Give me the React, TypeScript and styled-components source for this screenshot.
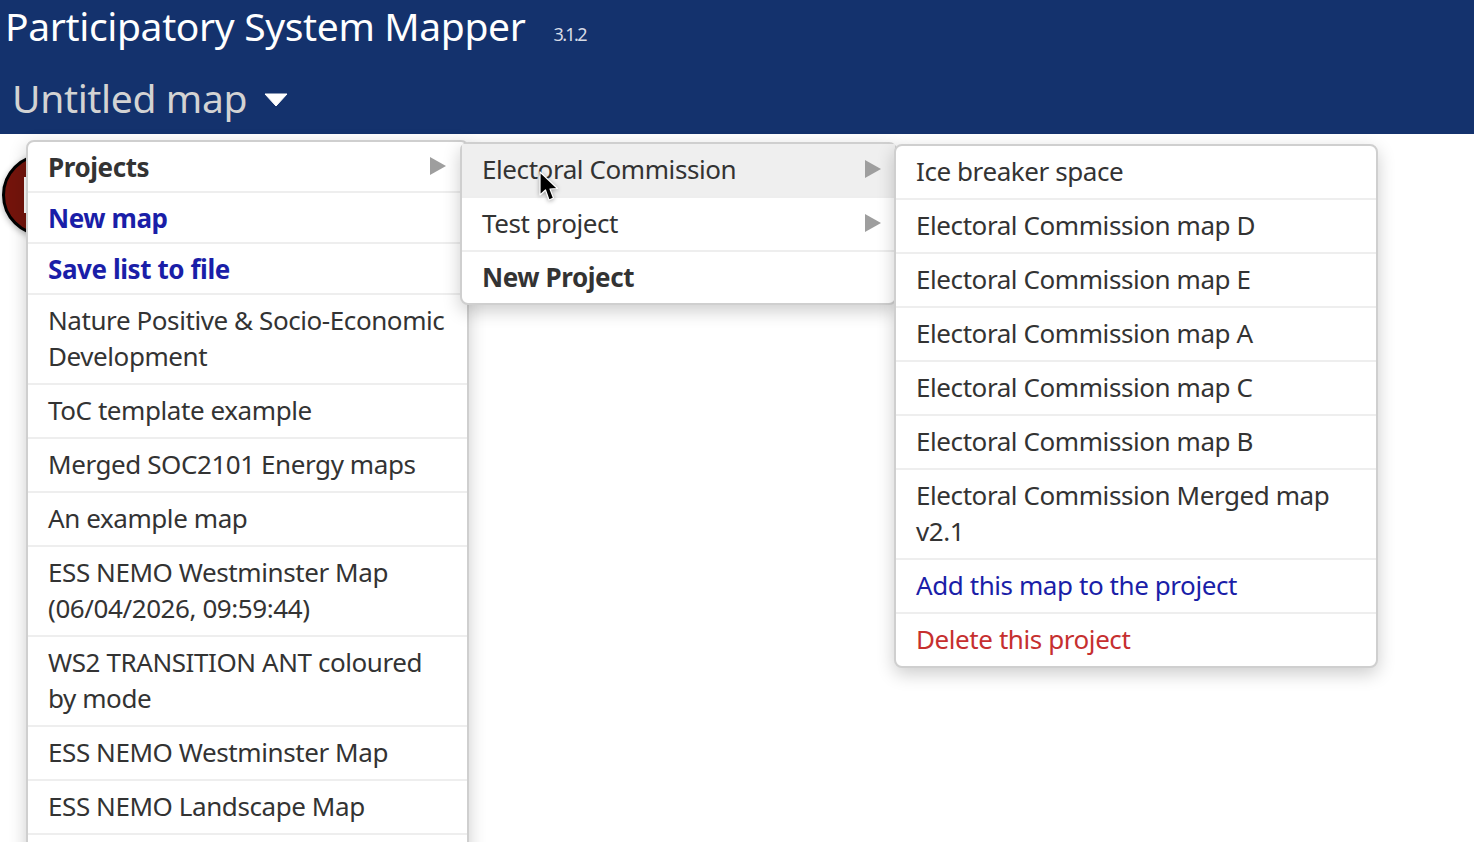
import React from 'react'
import styled, { createGlobalStyle } from 'styled-components'

const GlobalStyle = createGlobalStyle`
  html, body {
    margin: 0;
    height: 100%;
    overflow: hidden;
    background: #fff;
    font-family: "Noto Sans", "Open Sans", sans-serif;
  }
`

const Page = styled.div`
  position: relative;
  width: 1474px;
  height: 842px;
  overflow: hidden;
`

const Header = styled.header`
  height: 134px;
  background: #14326d;
  box-sizing: border-box;
  padding: 0 0 0 5px;
`

const TitleRow = styled.div`
  display: flex;
  align-items: baseline;
  gap: 28px;
  height: 68px;
`

const Title = styled.h1`
  margin: 0;
  font-size: 39px;
  line-height: 52px;
  font-weight: 400;
  letter-spacing: -0.36px;
  color: #fff;
`

const Version = styled.span`
  font-size: 18px;
  letter-spacing: -1.6px;
  color: #d8dce6;
`

const MapRow = styled.div`
  display: flex;
  align-items: center;
  gap: 17px;
  padding-left: 7px;
  height: 60px;
`

const MapName = styled.div`
  font-size: 39px;
  line-height: 52px;
  letter-spacing: -0.35px;
  color: #d3d3d3;
`

const Caret = styled.svg`
  width: 24px;
  height: 14px;
  margin-top: 3px;
`

const Node = styled.div`
  position: absolute;
  left: 2px;
  top: 154px;
  width: 76px;
  height: 76px;
  border-radius: 50%;
  border: 3px solid #000;
  background: #74140c;
  box-shadow: 0 2px 6px rgba(0, 0, 0, 0.3);
`

const NodeLabel = styled.div`
  position: absolute;
  left: 19px;
  top: 20px;
  width: 8px;
  height: 36px;
  background: #fff;
`

const Menu = styled.ul<{ $left: number; $top: number; $width: number; $z: number }>`
  position: absolute;
  left: ${(p) => p.$left}px;
  top: ${(p) => p.$top}px;
  width: ${(p) => p.$width}px;
  z-index: ${(p) => p.$z};
  margin: 0;
  padding: 0;
  list-style: none;
  box-sizing: border-box;
  background: #fff;
  border: 2px solid #cfcfcf;
  border-radius: 8px;
  box-shadow: 0 6px 18px rgba(0, 0, 0, 0.2);
  font-size: 26px;
  line-height: 36px;
  letter-spacing: -0.42px;
  color: #333;
`

const ROW_PADDING = {
  regular: '7px 18px 9px 20px',
  action: '7px 18px 6px 20px',
  end: '7px 18px 7px 20px',
}

const Item = styled.li<{
  $tone?: 'link' | 'danger'
  $hover?: boolean
  $bold?: boolean
  $row?: keyof typeof ROW_PADDING
}>`
  position: relative;
  box-sizing: border-box;
  min-height: 51px;
  padding: ${(p) => ROW_PADDING[p.$row ?? 'regular']};
  border-bottom: 2px solid #eeeeee;
  font-weight: ${(p) => (p.$bold ? 700 : 400)};
  color: ${(p) => (p.$tone === 'link' ? '#1a1ea8' : p.$tone === 'danger' ? '#c62f2f' : '#333')};
  background: ${(p) => (p.$hover ? '#efefef' : 'transparent')};

  &:last-child {
    border-bottom: none;
  }
`

const Arrow = styled.svg<{ $right: number; $top: number }>`
  position: absolute;
  right: ${(p) => p.$right}px;
  top: ${(p) => p.$top}px;
  width: 16px;
  height: 18px;
`

const Cursor = styled.svg`
  position: absolute;
  left: 538px;
  top: 170px;
  width: 22px;
  height: 36px;
  z-index: 10;
  filter: drop-shadow(0 1px 2px rgba(0, 0, 0, 0.35));
`

function SubArrow({ right = 14, top = 16 }: { right?: number; top?: number }) {
  return (
    <Arrow viewBox="0 0 16 18" $right={right} $top={top}>
      <path d="M0 0 L16 9 L0 18 Z" fill="#9e9e9e" />
    </Arrow>
  )
}

const MAPS = [
  'Nature Positive & Socio-Economic Development',
  'ToC template example',
  'Merged SOC2101 Energy maps',
  'An example map',
  'ESS NEMO Westminster Map (06/04/2026, 09:59:44)',
  'WS2 TRANSITION ANT coloured by mode',
  'ESS NEMO Westminster Map',
  'ESS NEMO Landscape Map',
]

const PROJECT_MAPS = [
  'Ice breaker space',
  'Electoral Commission map D',
  'Electoral Commission map E',
  'Electoral Commission map A',
  'Electoral Commission map C',
  'Electoral Commission map B',
  'Electoral Commission Merged map v2.1',
]

export default function App() {
  return (
    <Page>
      <GlobalStyle />
      <Header>
        <TitleRow>
          <Title>Participatory System Mapper</Title>
          <Version>3.1.2</Version>
        </TitleRow>
        <MapRow>
          <MapName>Untitled map</MapName>
          <Caret viewBox="0 0 24 14">
            <path d="M1 1 L23 1 L12 13 Z" fill="#fff" stroke="#fff" strokeLinejoin="round" />
          </Caret>
        </MapRow>
      </Header>

      <Node>
        <NodeLabel />
      </Node>

      <Menu $left={26} $top={140} $width={443} $z={1}>
        <Item $bold $row="action">
          Projects
          <SubArrow right={21} top={15} />
        </Item>
        <Item $bold $row="action" $tone="link">New map</Item>
        <Item $bold $row="action" $tone="link">Save list to file</Item>
        {MAPS.map((name) => (
          <Item key={name}>{name}</Item>
        ))}
        <Item />
      </Menu>

      <Menu $left={460} $top={142} $width={437} $z={2}>
        <Item $hover>
          Electoral Commission
          <SubArrow />
        </Item>
        <Item>
          Test project
          <SubArrow />
        </Item>
        <Item $bold $row="end">New Project</Item>
      </Menu>

      <Menu $left={894} $top={144} $width={484} $z={3}>
        {PROJECT_MAPS.map((name) => (
          <Item key={name}>{name}</Item>
        ))}
        <Item $tone="link">Add this map to the project</Item>
        <Item $tone="danger">Delete this project</Item>
      </Menu>

      <Cursor viewBox="0 0 22 36">
        <path
          d="M2 2 L2 25 L7.5 20 L11 30 L15.5 28 L12 19 L19.5 18.5 Z"
          fill="#000"
          stroke="#fff"
          strokeWidth="1.2"
          strokeLinejoin="round"
        />
      </Cursor>
    </Page>
  )
}
